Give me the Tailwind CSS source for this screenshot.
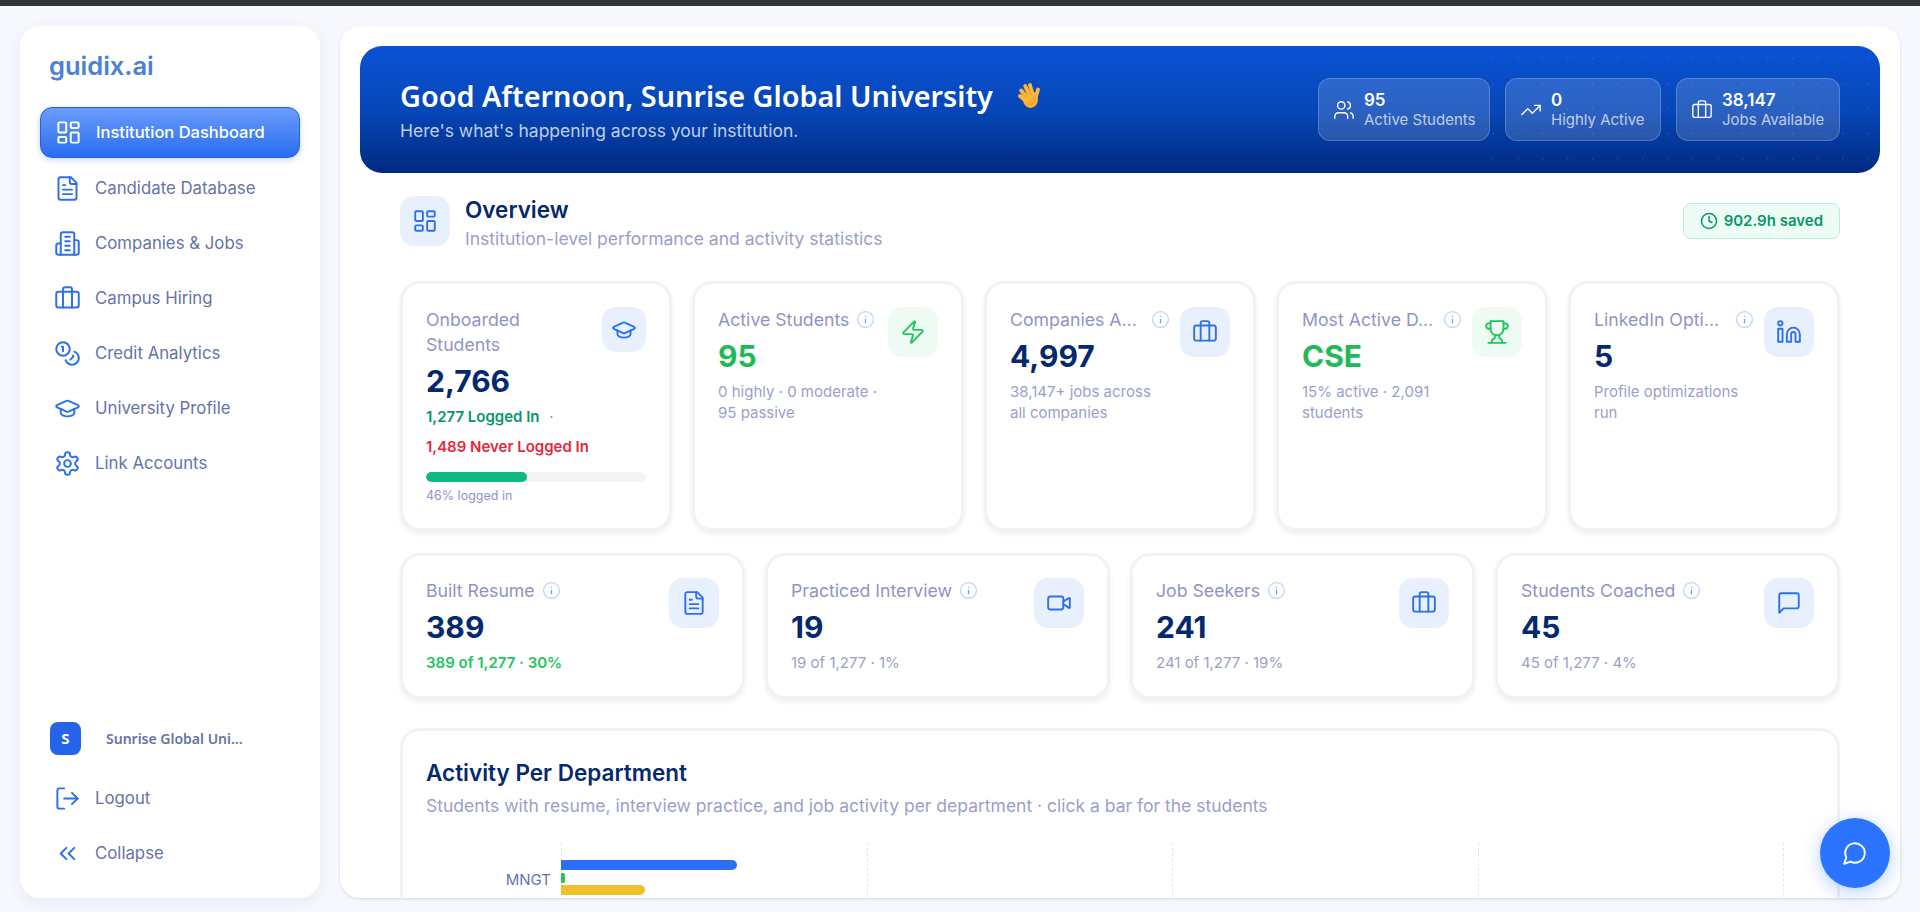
<!DOCTYPE html>
<html lang="en">
<head>
  <meta charset="UTF-8" />
  <meta name="viewport" content="width=device-width, initial-scale=1.0"/>
  <title>Institution Dashboard | guidix.ai</title>
  <script src="https://cdn.jsdelivr.net/npm/@tailwindcss/browser@4"></script>
</head>
<body class="bg-[#f6f8fd] text-[#05296e] font-[Inter,sans-serif]">

  <!-- icon sprite -->
  <svg class="hidden">
    <defs>
      <symbol id="i-dash" viewBox="0 0 24 24" stroke-linecap="round" stroke-linejoin="round"><rect x="3" y="3" width="7" height="9" rx="1"/><rect x="14" y="3" width="7" height="5" rx="1"/><rect x="14" y="12" width="7" height="9" rx="1"/><rect x="3" y="16" width="7" height="5" rx="1"/></symbol>
      <symbol id="i-file" viewBox="0 0 24 24" stroke-linecap="round" stroke-linejoin="round"><path d="M15 2H6a2 2 0 0 0-2 2v16a2 2 0 0 0 2 2h12a2 2 0 0 0 2-2V7Z"/><path d="M14 2v4a2 2 0 0 0 2 2h4"/><path d="M10 9H8"/><path d="M16 13H8"/><path d="M16 17H8"/></symbol>
      <symbol id="i-building" viewBox="0 0 24 24" stroke-linecap="round" stroke-linejoin="round"><path d="M6 22V4a2 2 0 0 1 2-2h8a2 2 0 0 1 2 2v18Z"/><path d="M6 12H4a2 2 0 0 0-2 2v6a2 2 0 0 0 2 2h2"/><path d="M18 9h2a2 2 0 0 1 2 2v9a2 2 0 0 1-2 2h-2"/><path d="M10 6h4"/><path d="M10 10h4"/><path d="M10 14h4"/><path d="M10 18h4"/></symbol>
      <symbol id="i-case" viewBox="0 0 24 24" stroke-linecap="round" stroke-linejoin="round"><path d="M16 20V4a2 2 0 0 0-2-2h-4a2 2 0 0 0-2 2v16"/><rect x="2" y="6" width="20" height="14" rx="2"/></symbol>
      <symbol id="i-coins" viewBox="0 0 24 24" stroke-linecap="round" stroke-linejoin="round"><circle cx="8" cy="8" r="6"/><path d="M18.09 10.37A6 6 0 1 1 10.34 18"/><path d="M7 6h1v4"/><path d="m16.71 13.88.7.71-2.82 2.82"/></symbol>
      <symbol id="i-cap" viewBox="0 0 24 24" stroke-linecap="round" stroke-linejoin="round"><path d="M21.42 10.922a1 1 0 0 0-.019-1.838L12.83 5.18a2 2 0 0 0-1.66 0L2.6 9.08a1 1 0 0 0 0 1.832l8.57 3.908a2 2 0 0 0 1.66 0z"/><path d="M6 12.5V16a6 3 0 0 0 12 0v-3.5"/></symbol>
      <symbol id="i-gear" viewBox="0 0 24 24" stroke-linecap="round" stroke-linejoin="round"><path d="M12.22 2h-.44a2 2 0 0 0-2 2v.18a2 2 0 0 1-1 1.73l-.43.25a2 2 0 0 1-2 0l-.15-.08a2 2 0 0 0-2.73.73l-.22.38a2 2 0 0 0 .73 2.73l.15.1a2 2 0 0 1 1 1.72v.51a2 2 0 0 1-1 1.74l-.15.09a2 2 0 0 0-.73 2.73l.22.38a2 2 0 0 0 2.73.73l.15-.08a2 2 0 0 1 2 0l.43.25a2 2 0 0 1 1 1.73V20a2 2 0 0 0 2 2h.44a2 2 0 0 0 2-2v-.18a2 2 0 0 1 1-1.73l.43-.25a2 2 0 0 1 2 0l.15.08a2 2 0 0 0 2.73-.73l.22-.39a2 2 0 0 0-.73-2.73l-.15-.08a2 2 0 0 1-1-1.74v-.5a2 2 0 0 1 1-1.74l.15-.09a2 2 0 0 0 .73-2.73l-.22-.38a2 2 0 0 0-2.73-.73l-.15.08a2 2 0 0 1-2 0l-.43-.25a2 2 0 0 1-1-1.73V4a2 2 0 0 0-2-2z"/><circle cx="12" cy="12" r="3"/></symbol>
      <symbol id="i-logout" viewBox="0 0 24 24" stroke-linecap="round" stroke-linejoin="round"><path d="M9 21H5a2 2 0 0 1-2-2V5a2 2 0 0 1 2-2h4"/><path d="m16 17 5-5-5-5"/><path d="M21 12H9"/></symbol>
      <symbol id="i-chev" viewBox="0 0 24 24" stroke-linecap="round" stroke-linejoin="round"><path d="m11 17-5-5 5-5"/><path d="m18 17-5-5 5-5"/></symbol>
      <symbol id="i-users" viewBox="0 0 24 24" stroke-linecap="round" stroke-linejoin="round"><path d="M16 21v-2a4 4 0 0 0-4-4H6a4 4 0 0 0-4 4v2"/><circle cx="9" cy="7" r="4"/><path d="M22 21v-2a4 4 0 0 0-3-3.87"/><path d="M16 3.13a4 4 0 0 1 0 7.75"/></symbol>
      <symbol id="i-trend" viewBox="0 0 24 24" stroke-linecap="round" stroke-linejoin="round"><path d="M16 7h6v6"/><path d="m22 7-8.5 8.5-5-5L2 17"/></symbol>
      <symbol id="i-clock" viewBox="0 0 24 24" stroke-linecap="round" stroke-linejoin="round"><circle cx="12" cy="12" r="10"/><path d="M12 6v6l4 2"/></symbol>
      <symbol id="i-zap" viewBox="0 0 24 24" stroke-linecap="round" stroke-linejoin="round"><path d="M4 14a1 1 0 0 1-.78-1.63l9.9-10.2a.5.5 0 0 1 .86.46l-1.92 6.02A1 1 0 0 0 13 10h7a1 1 0 0 1 .78 1.63l-9.9 10.2a.5.5 0 0 1-.86-.46l1.92-6.02A1 1 0 0 0 11 14z"/></symbol>
      <symbol id="i-trophy" viewBox="0 0 24 24" stroke-linecap="round" stroke-linejoin="round"><path d="M6 9H4.5a2.5 2.5 0 0 1 0-5H6"/><path d="M18 9h1.5a2.5 2.5 0 0 0 0-5H18"/><path d="M4 22h16"/><path d="M10 14.66V17c0 .55-.47.98-.97 1.21C7.85 18.75 7 20.24 7 22"/><path d="M14 14.66V17c0 .55.47.98.97 1.21C16.15 18.75 17 20.24 17 22"/><path d="M18 2H6v7a6 6 0 0 0 12 0V2Z"/></symbol>
      <symbol id="i-linkedin" viewBox="0 0 24 24" stroke-linecap="round" stroke-linejoin="round"><path d="M16 8a6 6 0 0 1 6 6v7h-4v-7a2 2 0 0 0-2-2 2 2 0 0 0-2 2v7h-4v-7a6 6 0 0 1 6-6z"/><rect x="2" y="9" width="4" height="12"/><circle cx="4" cy="4" r="2"/></symbol>
      <symbol id="i-video" viewBox="0 0 24 24" stroke-linecap="round" stroke-linejoin="round"><path d="m16 13 5.223 3.482a.5.5 0 0 0 .777-.416V7.87a.5.5 0 0 0-.752-.432L16 10.5"/><rect x="2" y="6" width="14" height="12" rx="2"/></symbol>
      <symbol id="i-msg" viewBox="0 0 24 24" stroke-linecap="round" stroke-linejoin="round"><path d="M21 15a2 2 0 0 1-2 2H7l-4 4V5a2 2 0 0 1 2-2h14a2 2 0 0 1 2 2z"/></symbol>
      <symbol id="i-chat" viewBox="0 0 24 24" stroke-linecap="round" stroke-linejoin="round"><path d="M7.9 20A9 9 0 1 0 4 16.1L2 22Z"/></symbol>
      <symbol id="i-info" viewBox="0 0 24 24" stroke-linecap="round" stroke-linejoin="round"><circle cx="12" cy="12" r="10" stroke="#bfd2f6"/><path d="M12 16v-4" stroke="#6f9df0"/><path d="M12 8h.01" stroke="#6f9df0"/></symbol>
    </defs>
  </svg>

  <div class="h-[912px] overflow-hidden flex flex-col">
    <div class="h-[6px] bg-[#333436] shrink-0"></div>

    <div class="flex-1 min-h-0 flex gap-5 pt-5 pr-5 pb-[14px] pl-5">

      <!-- Sidebar -->
      <aside class="w-[300px] shrink-0 bg-white rounded-[20px] shadow-[0_4px_14px_rgba(60,80,160,0.08)] flex flex-col pt-[23px] px-5 pb-[19px]">
        <div class="pl-[9px] h-[58px] text-[25.5px] leading-[33px] font-semibold text-[#4a80d8]">guidix.ai</div>

        <nav class="flex flex-col gap-1 text-[16.8px] text-[#6673a8]">
          <a class="h-[51px] mb-px flex items-center gap-3.5 px-3.5 rounded-xl border border-[#2563d8] bg-[linear-gradient(180deg,#6a9cfa,#2a6df0)] text-[16.5px] text-white font-medium shadow-[0_2px_6px_rgba(37,99,235,0.25)]">
            <svg class="w-[27px] h-[27px] shrink-0 fill-none stroke-current stroke-[1.75]"><use href="#i-dash"/></svg>Institution Dashboard
          </a>
          <a class="h-[51px] flex items-center gap-3.5 px-3.5">
            <svg class="w-[27px] h-[27px] shrink-0 fill-none stroke-[#2f6fe8] stroke-[1.75]"><use href="#i-file"/></svg>Candidate Database
          </a>
          <a class="h-[51px] flex items-center gap-3.5 px-3.5">
            <svg class="w-[27px] h-[27px] shrink-0 fill-none stroke-[#2f6fe8] stroke-[1.75]"><use href="#i-building"/></svg>Companies &amp; Jobs
          </a>
          <a class="h-[51px] flex items-center gap-3.5 px-3.5">
            <svg class="w-[27px] h-[27px] shrink-0 fill-none stroke-[#2f6fe8] stroke-[1.75]"><use href="#i-case"/></svg>Campus Hiring
          </a>
          <a class="h-[51px] flex items-center gap-3.5 px-3.5">
            <svg class="w-[27px] h-[27px] shrink-0 fill-none stroke-[#2f6fe8] stroke-[1.75]"><use href="#i-coins"/></svg>Credit Analytics
          </a>
          <a class="h-[51px] flex items-center gap-3.5 px-3.5">
            <svg class="w-[27px] h-[27px] shrink-0 fill-none stroke-[#2f6fe8] stroke-[1.75]"><use href="#i-cap"/></svg>University Profile
          </a>
          <a class="h-[51px] flex items-center gap-3.5 px-3.5">
            <svg class="w-[27px] h-[27px] shrink-0 fill-none stroke-[#2f6fe8] stroke-[1.75]"><use href="#i-gear"/></svg>Link Accounts
          </a>
        </nav>

        <div class="mt-auto text-[16.8px] text-[#6673a8]">
          <div class="flex items-center pl-2.5 mb-[18px]">
            <div class="w-[31px] h-[33px] rounded-lg bg-[#2563eb] text-white text-[15px] font-bold flex items-center justify-center font-['Noto_Sans',sans-serif]">S</div>
            <span class="ml-[25px] text-[14px] font-semibold font-['Noto_Sans',sans-serif]">Sunrise Global Uni...</span>
          </div>
          <a class="h-[51px] flex items-center gap-3.5 px-3.5">
            <svg class="w-[27px] h-[27px] shrink-0 fill-none stroke-[#2f6fe8] stroke-[1.75]"><use href="#i-logout"/></svg>Logout
          </a>
          <a class="h-[51px] mt-1 flex items-center gap-3.5 px-3.5">
            <svg class="w-[27px] h-[27px] shrink-0 fill-none stroke-[#2f6fe8] stroke-[1.75]"><use href="#i-chev"/></svg>Collapse
          </a>
        </div>
      </aside>

      <!-- Main -->
      <main class="flex-1 min-w-0 bg-white rounded-[20px] shadow-[0_1px_3px_rgba(60,80,120,0.18)] overflow-hidden pt-5 px-5">

        <!-- Hero -->
        <section class="relative overflow-hidden h-[127px] rounded-[22px] px-10 flex items-center justify-between bg-[linear-gradient(180deg,#0b52d4_0%,#0647b8_50%,#012a80_100%)]">
          <div class="absolute inset-y-0 right-0 w-[400px] bg-[radial-gradient(rgba(255,255,255,0.08)_1px,transparent_1px)] bg-[size:25px_25px]"></div>
          <div class="relative">
            <div class="flex items-center">
              <h1 class="text-[28.8px] leading-[38px] font-semibold text-white font-['Noto_Sans',sans-serif]">Good Afternoon, Sunrise Global University</h1>
              <svg class="ml-[25px] w-[22px] h-[27px]" viewBox="0 0 22 27" fill="none" stroke-linecap="round">
                <ellipse cx="12.5" cy="17.5" rx="7.5" ry="8.5" fill="#fbae33"/>
                <path d="M2 14l6 5M3.2 8.5l6 8M7.2 4l5 10M12 3l3 10.5M20 7.5l-2.5 8.5" stroke="#fbb63c" stroke-width="3.8"/>
                <path d="M4.5 11.5l4 4M6 6.8l3.8 7M10 4.5l3 8" stroke="#e58f1e" stroke-width=".7"/>
                <path d="M17 14c1 3-.5 7-4 9" stroke="#e58f1e" stroke-width=".7"/>
              </svg>
            </div>
            <p class="text-[17.5px] leading-6 text-white/75 mt-[4px]">Here's what's happening across your institution.</p>
          </div>
          <div class="relative flex gap-[15px]">
            <div class="h-[63px] w-[172px] flex items-center gap-[9px] px-[14px] rounded-xl bg-white/15 border border-white/20 text-white whitespace-nowrap">
              <svg class="w-[22px] h-[22px] shrink-0 fill-none stroke-current stroke-[1.5]"><use href="#i-users"/></svg>
              <div><div class="text-[17px] leading-5 font-semibold">95</div><div class="text-[15px] leading-5 text-white/70">Active Students</div></div>
            </div>
            <div class="h-[63px] w-[156px] flex items-center gap-[9px] px-[14px] rounded-xl bg-white/15 border border-white/20 text-white whitespace-nowrap">
              <svg class="w-[22px] h-[22px] shrink-0 fill-none stroke-current stroke-[1.5]"><use href="#i-trend"/></svg>
              <div><div class="text-[17px] leading-5 font-semibold">0</div><div class="text-[15px] leading-5 text-white/70">Highly Active</div></div>
            </div>
            <div class="h-[63px] w-[164px] flex items-center gap-[9px] px-[14px] rounded-xl bg-white/15 border border-white/20 text-white whitespace-nowrap">
              <svg class="w-[22px] h-[22px] shrink-0 fill-none stroke-current stroke-[1.5]"><use href="#i-case"/></svg>
              <div><div class="text-[17px] leading-5 font-semibold">38,147</div><div class="text-[15px] leading-5 text-white/70">Jobs Available</div></div>
            </div>
          </div>
        </section>

        <div class="px-10">
          <!-- Overview heading -->
          <div class="mt-[23px] flex items-start justify-between">
            <div class="flex gap-[15px]">
              <div class="w-[50px] h-[50px] rounded-[14px] bg-[#e8f0fe] flex items-center justify-center">
                <svg class="w-[26px] h-[26px] fill-none stroke-[#2f6fe8] stroke-[1.75]"><use href="#i-dash"/></svg>
              </div>
              <div>
                <h2 class="text-[22.5px] leading-[27px] font-semibold">Overview</h2>
                <p class="text-[17.5px] leading-6 text-[#9a9fc9] mt-[4px]">Institution-level performance and activity statistics</p>
              </div>
            </div>
            <div class="mt-[7px] h-9 px-4 flex items-center gap-[6px] rounded-lg bg-[#edfdf6] border border-[#b4f0d4] text-[15px] font-semibold text-[#059669]">
              <svg class="w-[18px] h-[18px] fill-none stroke-current stroke-2"><use href="#i-clock"/></svg>902.9h saved
            </div>
          </div>

          <!-- Row 1 -->
          <div class="mt-[30px] grid grid-cols-5 gap-5">
            <div class="h-[250px] rounded-[20px] border-[3px] border-[#f1f2f5] shadow-[0_3px_5px_rgba(40,50,80,0.08)] px-[23px] pt-[23px]">
              <div class="flex gap-[10px]">
                <div class="flex-1 min-w-0">
                  <div class="text-[17.7px] leading-[25px] text-[#8f94c4]">Onboarded<br>Students</div>
                </div>
                <div class="w-[44px] h-[45px] shrink-0 rounded-[14px] bg-[#e8f0fe] flex items-center justify-center">
                  <svg class="w-[26px] h-[26px] fill-none stroke-[#2f6fe8] stroke-[1.75]"><use href="#i-cap"/></svg>
                </div>
              </div>
              <div class="text-[30px] leading-9 font-bold mt-[6px]">2,766</div>
              <div class="text-[15px] leading-5 font-semibold text-[#059669] mt-[8px]">1,277 Logged In <span class="ml-[6px] font-normal text-[#8f94c4]">·</span></div>
              <div class="text-[15px] leading-5 font-semibold text-[#e5283a] mt-[10px]">1,489 Never Logged In</div>
              <div class="h-[10px] rounded-full bg-[#f3f4f6] mt-[15px] overflow-hidden"><div class="h-full w-[46%] rounded-full bg-[#10b981]"></div></div>
              <div class="text-[12.5px] leading-4 text-[#8f94c4] mt-[6px]">46% logged in</div>
            </div>

            <div class="h-[250px] rounded-[20px] border-[3px] border-[#f1f2f5] shadow-[0_3px_5px_rgba(40,50,80,0.08)] px-[23px] pt-[23px] flex gap-[10px]">
              <div class="flex-1 min-w-0">
                <div class="flex items-center gap-[7px] text-[17.7px] leading-[25px] text-[#8f94c4]"><span class="whitespace-nowrap">Active Students</span><svg class="w-[19px] h-[19px] shrink-0 fill-none stroke-[1.6]"><use href="#i-info"/></svg></div>
                <div class="text-[30px] leading-9 font-bold mt-[6px] text-[#1fb958]">95</div>
                <p class="text-[15px] leading-[21px] text-[#9a9fc9] mt-[7px]">0 highly · 0 moderate ·<br>95 passive</p>
              </div>
              <div class="w-[50px] h-[50px] shrink-0 rounded-[14px] bg-[#edfbf3] flex items-center justify-center">
                <svg class="w-[26px] h-[26px] fill-none stroke-[#22c55e] stroke-[1.75]"><use href="#i-zap"/></svg>
              </div>
            </div>

            <div class="h-[250px] rounded-[20px] border-[3px] border-[#f1f2f5] shadow-[0_3px_5px_rgba(40,50,80,0.08)] px-[23px] pt-[23px] flex gap-[10px]">
              <div class="flex-1 min-w-0">
                <div class="flex items-center gap-[7px] text-[17.7px] leading-[25px] text-[#8f94c4]"><span class="w-[134px] whitespace-nowrap">Companies A...</span><svg class="w-[19px] h-[19px] shrink-0 fill-none stroke-[1.6]"><use href="#i-info"/></svg></div>
                <div class="text-[30px] leading-9 font-bold mt-[6px]">4,997</div>
                <p class="text-[15px] leading-[21px] text-[#9a9fc9] mt-[7px]">38,147+ jobs across<br>all companies</p>
              </div>
              <div class="w-[50px] h-[50px] shrink-0 rounded-[14px] bg-[#e8f0fe] flex items-center justify-center">
                <svg class="w-[26px] h-[26px] fill-none stroke-[#2f6fe8] stroke-[1.75]"><use href="#i-case"/></svg>
              </div>
            </div>

            <div class="h-[250px] rounded-[20px] border-[3px] border-[#f1f2f5] shadow-[0_3px_5px_rgba(40,50,80,0.08)] px-[23px] pt-[23px] flex gap-[10px]">
              <div class="flex-1 min-w-0">
                <div class="flex items-center gap-[7px] text-[17.7px] leading-[25px] text-[#8f94c4]"><span class="w-[134px] whitespace-nowrap">Most Active D...</span><svg class="w-[19px] h-[19px] shrink-0 fill-none stroke-[1.6]"><use href="#i-info"/></svg></div>
                <div class="text-[30px] leading-9 font-bold mt-[6px] text-[#1fb958]">CSE</div>
                <p class="text-[15px] leading-[21px] text-[#9a9fc9] mt-[7px]">15% active · 2,091<br>students</p>
              </div>
              <div class="w-[50px] h-[50px] shrink-0 rounded-[14px] bg-[#edfbf3] flex items-center justify-center">
                <svg class="w-[26px] h-[26px] fill-none stroke-[#22c55e] stroke-[1.75]"><use href="#i-trophy"/></svg>
              </div>
            </div>

            <div class="h-[250px] rounded-[20px] border-[3px] border-[#f1f2f5] shadow-[0_3px_5px_rgba(40,50,80,0.08)] px-[23px] pt-[23px] flex gap-[10px]">
              <div class="flex-1 min-w-0">
                <div class="flex items-center gap-[7px] text-[17.7px] leading-[25px] text-[#8f94c4]"><span class="w-[134px] whitespace-nowrap">LinkedIn Opti...</span><svg class="w-[19px] h-[19px] shrink-0 fill-none stroke-[1.6]"><use href="#i-info"/></svg></div>
                <div class="text-[30px] leading-9 font-bold mt-[6px]">5</div>
                <p class="text-[15px] leading-[21px] text-[#9a9fc9] mt-[7px]">Profile optimizations<br>run</p>
              </div>
              <div class="w-[50px] h-[50px] shrink-0 rounded-[14px] bg-[#e8f0fe] flex items-center justify-center">
                <svg class="w-[26px] h-[26px] fill-none stroke-[#2f6fe8] stroke-[1.75]"><use href="#i-linkedin"/></svg>
              </div>
            </div>
          </div>

          <!-- Row 2 -->
          <div class="mt-[22px] grid grid-cols-4 gap-5">
            <div class="h-[146px] rounded-[20px] border-[3px] border-[#f1f2f5] shadow-[0_3px_5px_rgba(40,50,80,0.08)] px-[23px] pt-[22px] flex gap-[10px]">
              <div class="flex-1 min-w-0">
                <div class="flex items-center gap-[7px] text-[17.7px] leading-[25px] text-[#8f94c4]"><span class="whitespace-nowrap">Built Resume</span><svg class="w-[19px] h-[19px] shrink-0 fill-none stroke-[1.6]"><use href="#i-info"/></svg></div>
                <div class="text-[30px] leading-9 font-bold mt-[6px]">389</div>
                <p class="text-[15px] leading-[21px] font-semibold text-[#22c55e] mt-[7px]">389 of 1,277 · 30%</p>
              </div>
              <div class="w-[50px] h-[50px] shrink-0 rounded-[14px] bg-[#e8f0fe] flex items-center justify-center">
                <svg class="w-[26px] h-[26px] fill-none stroke-[#2f6fe8] stroke-[1.75]"><use href="#i-file"/></svg>
              </div>
            </div>
            <div class="h-[146px] rounded-[20px] border-[3px] border-[#f1f2f5] shadow-[0_3px_5px_rgba(40,50,80,0.08)] px-[23px] pt-[22px] flex gap-[10px]">
              <div class="flex-1 min-w-0">
                <div class="flex items-center gap-[7px] text-[17.7px] leading-[25px] text-[#8f94c4]"><span class="whitespace-nowrap">Practiced Interview</span><svg class="w-[19px] h-[19px] shrink-0 fill-none stroke-[1.6]"><use href="#i-info"/></svg></div>
                <div class="text-[30px] leading-9 font-bold mt-[6px]">19</div>
                <p class="text-[15px] leading-[21px] text-[#9a9fc9] mt-[7px]">19 of 1,277 · 1%</p>
              </div>
              <div class="w-[50px] h-[50px] shrink-0 rounded-[14px] bg-[#e8f0fe] flex items-center justify-center">
                <svg class="w-[26px] h-[26px] fill-none stroke-[#2f6fe8] stroke-[1.75]"><use href="#i-video"/></svg>
              </div>
            </div>
            <div class="h-[146px] rounded-[20px] border-[3px] border-[#f1f2f5] shadow-[0_3px_5px_rgba(40,50,80,0.08)] px-[23px] pt-[22px] flex gap-[10px]">
              <div class="flex-1 min-w-0">
                <div class="flex items-center gap-[7px] text-[17.7px] leading-[25px] text-[#8f94c4]"><span class="whitespace-nowrap">Job Seekers</span><svg class="w-[19px] h-[19px] shrink-0 fill-none stroke-[1.6]"><use href="#i-info"/></svg></div>
                <div class="text-[30px] leading-9 font-bold mt-[6px]">241</div>
                <p class="text-[15px] leading-[21px] text-[#9a9fc9] mt-[7px]">241 of 1,277 · 19%</p>
              </div>
              <div class="w-[50px] h-[50px] shrink-0 rounded-[14px] bg-[#e8f0fe] flex items-center justify-center">
                <svg class="w-[26px] h-[26px] fill-none stroke-[#2f6fe8] stroke-[1.75]"><use href="#i-case"/></svg>
              </div>
            </div>
            <div class="h-[146px] rounded-[20px] border-[3px] border-[#f1f2f5] shadow-[0_3px_5px_rgba(40,50,80,0.08)] px-[23px] pt-[22px] flex gap-[10px]">
              <div class="flex-1 min-w-0">
                <div class="flex items-center gap-[7px] text-[17.7px] leading-[25px] text-[#8f94c4]"><span class="whitespace-nowrap">Students Coached</span><svg class="w-[19px] h-[19px] shrink-0 fill-none stroke-[1.6]"><use href="#i-info"/></svg></div>
                <div class="text-[30px] leading-9 font-bold mt-[6px]">45</div>
                <p class="text-[15px] leading-[21px] text-[#9a9fc9] mt-[7px]">45 of 1,277 · 4%</p>
              </div>
              <div class="w-[50px] h-[50px] shrink-0 rounded-[14px] bg-[#e8f0fe] flex items-center justify-center">
                <svg class="w-[26px] h-[26px] fill-none stroke-[#2f6fe8] stroke-[1.75]"><use href="#i-msg"/></svg>
              </div>
            </div>
          </div>

          <!-- Activity chart -->
          <section class="mt-[29px] h-[400px] rounded-[20px] border-[3px] border-[#f1f2f5] px-[23px] pt-[28px]">
            <h2 class="text-[22.5px] leading-7 font-semibold">Activity Per Department</h2>
            <p class="text-[17.5px] leading-6 text-[#9a9fc9] mt-[7px]">Students with resume, interview practice, and job activity per department · click a bar for the students</p>
            <div class="mt-[25px] flex">
              <div class="w-[135px] shrink-0 pr-[10px] pt-[27px] text-right text-[15px] leading-5 text-[#6673a8]">MNGT</div>
              <div class="flex-1 relative h-[200px]">
                <div class="absolute inset-0 grid grid-cols-[305.5px_305.5px_305.5px_305.5px_1fr]">
                  <div class="border-l border-dashed border-[#e3e6ec]"></div>
                  <div class="border-l border-dashed border-[#e3e6ec]"></div>
                  <div class="border-l border-dashed border-[#e3e6ec]"></div>
                  <div class="border-l border-dashed border-[#e3e6ec]"></div>
                  <div class="border-l border-dashed border-[#e3e6ec]"></div>
                </div>
                <div class="relative pt-[17px] flex flex-col gap-[2.5px]">
                  <div class="h-[10px] w-[176px] rounded-r-full bg-[#2b6ff5]"></div>
                  <div class="h-[10px] w-[4px] rounded-r-[2px] bg-[#22c55e]"></div>
                  <div class="h-[10px] w-[84px] rounded-r-full bg-[#f0c02c]"></div>
                </div>
              </div>
            </div>
          </section>
        </div>
      </main>
    </div>
  </div>

  <!-- Chat button -->
  <button class="fixed left-[1820px] top-[818px] w-[70px] h-[70px] rounded-full bg-[#2b74ff] flex items-center justify-center shadow-[0_4px_18px_rgba(43,116,255,0.35)]">
    <svg class="w-[26px] h-[26px] fill-none stroke-white stroke-[1.75]"><use href="#i-chat"/></svg>
  </button>

</body>
</html>
